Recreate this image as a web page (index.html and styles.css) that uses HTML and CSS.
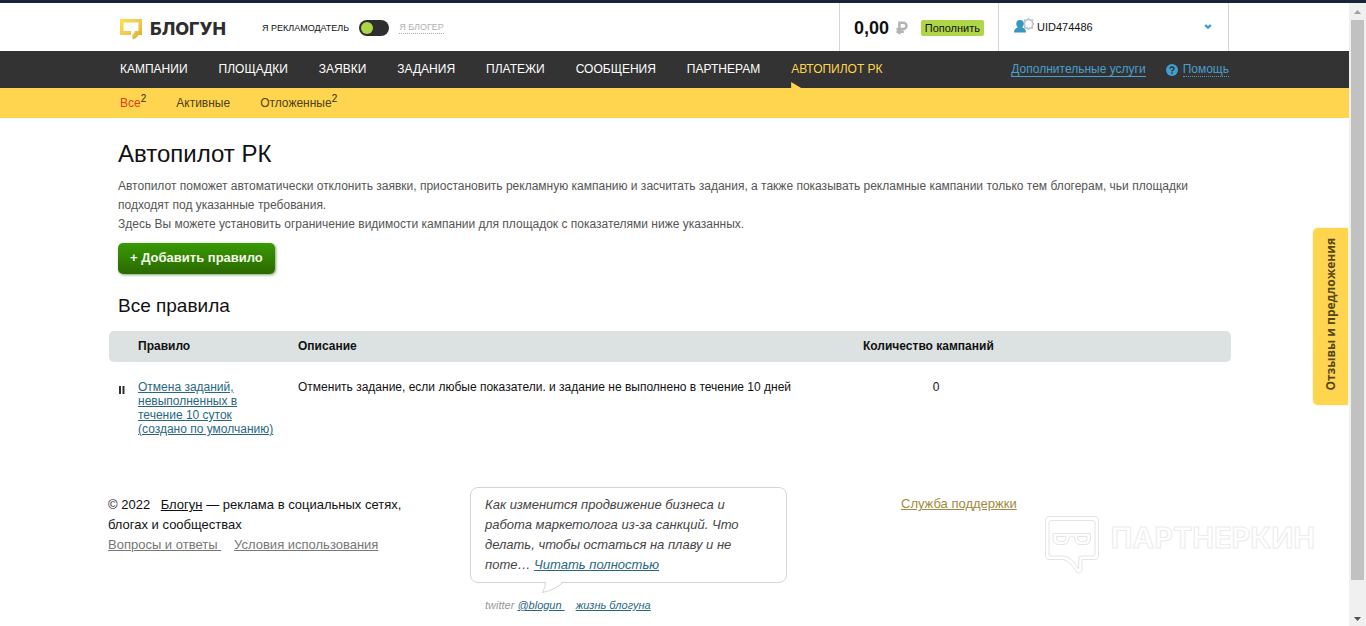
FILE: index.html
```html
<!DOCTYPE html>
<html lang="ru">
<head>
<meta charset="utf-8">
<title>Автопилот РК — Блогун</title>
<link rel="stylesheet" href="styles.css">
</head>
<body>
<div class="window">
  <div class="page">
    <header class="header">
      <div class="container header-row">
        <a class="logo" href="#">
          <svg class="logo-mark" width="23" height="22" viewBox="0 0 23 22" aria-hidden="true">
            <defs>
              <linearGradient id="gold" x1="0" y1="0" x2="1" y2="1">
                <stop offset="0" stop-color="#ffe04a"/>
                <stop offset="0.5" stop-color="#f0cb50"/>
                <stop offset="1" stop-color="#d9a92e"/>
              </linearGradient>
            </defs>
            <path d="M0 1H22V17H18.500Q17 20 12.500 21.500V17Q14.500 15.500 15 13H18.500V4.500H3.500V13H11V17H0Z" fill="url(#gold)"/>
          </svg>
          <span class="logo-text">БЛОГУН</span>
        </a>
        <div class="role">
          <label for="role-switch">Я РЕКЛАМОДАТЕЛЬ</label>
          <input class="switch" type="checkbox" role="switch" id="role-switch">
          <a class="role-other" href="#">Я БЛОГЕР</a>
        </div>
        <div class="balance">
          <strong class="sum">0,00</strong>
          <svg class="ruble" width="12" height="14" viewBox="0 0 12 14" aria-label="руб." role="img">
            <path d="M3.500 13.500V1.500H7.500A3 3 0 0 1 7.500 8H0.500M0.500 10.800H8" fill="none" stroke="#b4b4b4" stroke-width="2.600"/>
          </svg>
          <button class="refill" type="button">Пополнить</button>
        </div>
        <button class="user" type="button">
          <svg class="user-icon" width="20" height="16" viewBox="0 0 20 16" aria-hidden="true">
            <path d="M14.500 .8L16 2.300L18.300 2.200L18.200 4.400L19.400 6L18.200 7.600L18.300 9.800L16 9.700L14.500 11.200L13 9.700L10.800 9.800L10.900 7.600L9.600 6L10.900 4.400L10.800 2.200L13 2.300Z" fill="#fff" stroke="#bfc3c6" stroke-width="1.600"/>
            <path d="M0 14.500Q0 10.500 4 9.600Q2 7.800 2.300 5Q2.800 2 6 2Q9.500 2 9.700 5.200Q9.800 7.800 8 9.600Q12 10.500 12 14.500Z" fill="#3498c6"/>
          </svg>
          <span>UID474486</span>
          <svg class="chevron" width="8" height="6" viewBox="0 0 8 6" aria-hidden="true">
            <path d="M1.200 1L4 3.800L6.800 1" fill="none" stroke="#3498c6" stroke-width="2.200"/>
          </svg>
        </button>
      </div>
    </header>

    <nav class="nav">
      <div class="container nav-row">
        <a href="#">КАМПАНИИ</a>
        <a href="#">ПЛОЩАДКИ</a>
        <a href="#">ЗАЯВКИ</a>
        <a href="#">ЗАДАНИЯ</a>
        <a href="#">ПЛАТЕЖИ</a>
        <a href="#">СООБЩЕНИЯ</a>
        <a href="#">ПАРТНЕРАМ</a>
        <a class="active" href="#">АВТОПИЛОТ РК</a>
        <div class="nav-extra">
          <a class="extra-link" href="#">Дополнительные услуги</a>
          <a class="help" href="#">
            <svg width="12" height="12" viewBox="0 0 12 12" aria-hidden="true">
              <circle cx="6" cy="6" r="6" fill="#3f9fd0"/>
              <path d="M4 4.700Q4.100 3 6 3Q8 3 8 4.600Q8 5.500 6.900 6Q6 6.500 6 7.400M6 8.300V9.700" fill="none" stroke="#333" stroke-width="1.400"/>
            </svg>
            <span>Помощь</span>
          </a>
        </div>
      </div>
    </nav>

    <nav class="subnav">
      <div class="container subnav-row">
        <a class="current" href="#">Все<sup>2</sup></a>
        <a href="#">Активные</a>
        <a href="#">Отложенные<sup>2</sup></a>
      </div>
    </nav>

    <div class="container">
      <main class="content">
        <div class="intro">
          <h1>Автопилот РК</h1>
          <p>Автопилот поможет автоматически отклонить заявки, приостановить рекламную кампанию и засчитать задания, а также показывать рекламные кампании только тем блогерам, чьи площадки подходят под указанные требования.<br>Здесь Вы можете установить ограничение видимости кампании для площадок с показателями ниже указанных.</p>
          <button class="add" type="button">+ Добавить правило</button>
          <h2>Все правила</h2>
        </div>
        <table class="rules">
          <thead>
            <tr>
              <th class="col-state"></th>
              <th class="col-rule">Правило</th>
              <th class="col-text">Описание</th>
              <th class="col-count">Количество кампаний</th>
              <th></th>
            </tr>
          </thead>
          <tbody>
            <tr>
              <td class="col-state">
                <svg class="pause" width="6" height="8" viewBox="0 0 6 8" role="img" aria-label="Приостановлено">
                  <path d="M1 0V8M4.500 0V8" stroke="#333" stroke-width="2"/>
                </svg>
              </td>
              <td class="col-rule"><a href="#">Отмена заданий, невыполненных в течение 10 суток (создано по умолчанию)</a></td>
              <td>Отменить задание, если любые показатели. и задание не выполнено в течение 10 дней</td>
              <td class="count">0</td>
              <td></td>
            </tr>
          </tbody>
        </table>
      </main>

      <footer class="footer">
        <div class="about">
          <p>© 2022 <a class="brand" href="#">Блогун</a> — реклама в социальных сетях, блогах и сообществах</p>
          <p class="about-links"><a href="#">Вопросы и ответы&nbsp;</a><a href="#">Условия использования</a></p>
        </div>
        <div class="news">
          <div class="bubble">
            Как изменится продвижение бизнеса и работа маркетолога из-за санкций. Что делать, чтобы остаться на плаву и не поте… <a href="#">Читать полностью</a>
            <svg class="tail" width="24" height="12" viewBox="0 0 24 12" aria-hidden="true">
              <path d="M3 -1Q3 7 0.500 10.500Q13 8 21 -1Z" fill="#fff"/>
              <path d="M3.500 0Q3.500 6 0.500 10.500Q13 8 21.500 0" fill="none" stroke="#d5d5d5"/>
            </svg>
          </div>
          <p class="sources">twitter <a href="#">@blogun&nbsp;</a><a class="life" href="#">жизнь блогуна</a></p>
        </div>
        <a class="support" href="#">Служба поддержки</a>
      </footer>
    </div>

    <button class="feedback" type="button"><span>Отзывы и предложения</span></button>

    <div class="watermark">
      <svg width="54" height="58" viewBox="0 0 54 58" fill="none" stroke="#e4e4e4" aria-hidden="true">
        <path d="M5 .5H49Q53.500 .5 53.500 5V39Q53.500 43.500 49 43.500H37V54Q36.500 58 32.500 57Q24 44 18 43.500H5Q.5 43.500 .5 39V5Q.5 .5 5 .5Z"/>
        <path d="M6 4.500H48Q50 4.500 50 6.500V38Q50 40 48 40H34.500Q33.500 42 33.500 53Q26 40 18 40H6Q4 40 4 38V6.500Q4 4.500 6 4.500Z"/>
        <path d="M8 17.500H45.500V22Q45.500 28.500 40 28.500H35Q30 28.500 29.500 21H24Q23.500 28.500 18 28.500H13.500Q8 28.500 8 22Z"/>
        <path d="M11.500 20.500H21V22Q21 25.500 18 25.500H14.500Q11.500 25.500 11.500 22ZM32.500 20.500H42V22Q42 25.500 39 25.500H35.500Q32.500 25.500 32.500 22Z"/>
      </svg>
      <span>ПАРТНЕРКИН</span>
    </div>
  </div>

  <div class="scrollbar" aria-hidden="true">
    <svg width="17" height="17" viewBox="0 0 17 17"><path d="M5 11L8.500 7L12 11Z" fill="#a0a0a0"/></svg>
    <div class="track"><div class="thumb"></div></div>
    <svg width="17" height="17" viewBox="0 0 17 17"><path d="M5 8L8.500 12L12 8Z" fill="#505050"/></svg>
  </div>
</div>
</body>
</html>
```
FILE: styles.css
```css
* {
  box-sizing: border-box;
}

body {
  margin: 0;
  background: #fff;
  color: #111;
  font: 12px/14px "Liberation Sans", Arial, sans-serif;
}

h1, h2, p {
  margin: 0;
}

button {
  border: 0;
  padding: 0;
  background: none;
  color: inherit;
  font: inherit;
  cursor: pointer;
}

a {
  color: #29677f;
}

.window {
  display: flex;
  min-height: 100vh;
  border-top: 3px solid #15263a;
}

.page {
  position: relative;
  flex: 1;
  min-width: 0;
}

.container {
  max-width: 1109px;
  margin: 0 auto;
}

/* Header */
.header-row {
  display: flex;
  align-items: stretch;
  height: 48px;
}

.logo {
  display: flex;
  align-items: center;
  gap: 7px;
  width: 142px;
  padding-top: 4px;
  color: #2d2d2d;
  text-decoration: none;
}

.logo-text {
  font: 800 18px/20px Inter, sans-serif;
}

.role {
  display: flex;
  flex: 1;
  align-items: center;
  gap: 10px;
  padding-top: 2px;
  font-size: 9px;
}

.switch {
  appearance: none;
  width: 30px;
  height: 16px;
  margin: 0;
  padding: 2px;
  border-radius: 8px;
  background: #2e2e2e;
}

.switch::before {
  content: "";
  display: block;
  width: 12px;
  height: 12px;
  border-radius: 50%;
  background: #abd647;
}

.role-other {
  border-bottom: 1px dotted #aaa;
  color: #b0b0b0;
  line-height: 11px;
  text-decoration: none;
}

.balance {
  display: flex;
  align-items: center;
  width: 160px;
  padding: 2px 14px 0;
  border: solid #d6d6d6;
  border-width: 0 1px;
}

.sum {
  font-size: 18px;
  line-height: 20px;
}

.ruble {
  margin: 0 13px 0 7px;
}

.refill {
  height: 16px;
  padding: 0 4px;
  border-radius: 2px;
  background: #aed648;
  font-size: 11px;
}

.user {
  display: flex;
  align-items: center;
  gap: 3px;
  width: 230px;
  padding: 0 16px 0 15px;
  border-right: 1px solid #d6d6d6;
  font-size: 11px;
}

.user-icon {
  margin-bottom: 3px;
}

.chevron {
  margin-left: auto;
}

/* Main navigation */
.nav {
  background: #333;
}

.nav-row {
  display: flex;
  gap: 31px;
  height: 37px;
}

.nav-row > a {
  color: #fff;
  line-height: 36px;
  text-decoration: none;
}

.nav-row > .active {
  position: relative;
  color: #ffd54f;
}

.active::after {
  content: "";
  position: absolute;
  bottom: 0;
  left: 0;
  width: 10px;
  height: 6px;
  background: #ffd54f;
  clip-path: polygon(0 0, 100% 100%, 0 100%);
}

.nav-extra {
  display: flex;
  align-items: center;
  gap: 20px;
  margin-left: auto;
}

.nav-extra a {
  color: #4a9fcb;
  text-decoration: none;
}

.extra-link {
  border-bottom: 1px solid #4a9fcb;
}

.help {
  display: flex;
  align-items: center;
  gap: 5px;
}

.help span {
  border-bottom: 1px dotted #4a9fcb;
}

/* Secondary navigation */
.subnav {
  background: #ffd54f;
}

.subnav-row {
  display: flex;
  gap: 30px;
  height: 30px;
}

.subnav a {
  color: #4d4218;
  line-height: 30px;
  text-decoration: none;
}

.subnav .current {
  color: #e0401c;
}

.subnav sup {
  color: #332b10;
  font-size: 10px;
  line-height: 0;
}

/* Content */
.content {
  margin: 0 -2px 0 -11px;
}

.intro {
  padding: 22px 9px 0;
}

h1 {
  font-size: 24px;
  font-weight: 400;
  line-height: 28px;
}

.intro p {
  padding: 9px 0;
  color: #555;
  line-height: 19px;
}

.add {
  display: block;
  height: 31px;
  padding: 0 12px 2px;
  border-radius: 5px;
  background: linear-gradient(#389a05, #2b6800);
  box-shadow: 1px 1px 3px #83a070;
  color: #f2f8e8;
  font-size: 13px;
  font-weight: 700;
}

h2 {
  padding: 20px 0 13px;
  font-size: 19px;
  font-weight: 400;
  line-height: 24px;
}

.rules {
  width: 100%;
  border-collapse: separate;
  border-spacing: 0;
  table-layout: fixed;
}

.rules th {
  height: 31px;
  padding: 0 0 2px;
  background: #dce2e2;
  text-align: left;
}

.rules th:first-child {
  border-radius: 5px 0 0 5px;
}

.rules th:last-child {
  border-radius: 0 5px 5px 0;
}

.rules td {
  padding: 18px 0 0;
  vertical-align: top;
}

.rules .col-state {
  width: 29px;
  padding-left: 10px;
}

.col-rule {
  width: 160px;
}

.rules td.col-rule {
  padding-right: 20px;
}

.col-text {
  width: 565px;
}

.col-count {
  width: 146px;
}

.count {
  text-align: center;
}

.pause {
  display: block;
  margin-top: 6px;
}

/* Footer */
.footer {
  display: flex;
  align-items: flex-start;
  margin-left: -12px;
  padding-top: 51px;
  font-size: 13px;
  line-height: 20px;
}

.about {
  width: 362px;
  padding: 8px 50px 0 0;
}

.brand {
  margin-left: 7px;
  color: #111;
}

.about-links {
  display: flex;
  gap: 13px;
}

.about-links a {
  color: #777;
}

.news {
  width: 317px;
  font-style: italic;
}

.bubble {
  position: relative;
  padding: 7px 40px 7px 14px;
  border: 1px solid #d5d5d5;
  border-radius: 8px;
  color: #444;
}

.tail {
  position: absolute;
  top: 100%;
  left: 71px;
  overflow: visible;
}

.sources {
  padding: 12px 0 0 15px;
  color: #999;
  font-size: 11px;
}

.life {
  margin-left: 11px;
}

.support {
  margin: 7px 0 0 114px;
  color: #a08a40;
}

/* Overlays */
.feedback {
  position: absolute;
  top: 225px;
  right: 1px;
  width: 35px;
  height: 177px;
  border-radius: 5px 0 0 5px;
  background: #ffd54f;
  box-shadow: 0 0 2px #ffe58c;
  color: #54471a;
  font: 700 12px/18px "Open Sans", sans-serif;
}

.feedback span {
  writing-mode: vertical-rl;
  transform: rotate(180deg);
}

.watermark {
  position: absolute;
  right: 34px;
  bottom: 52px;
  display: flex;
  gap: 12px;
  color: #fff;
  font: 700 29px/44px Inter, sans-serif;
  -webkit-text-stroke: 1px #ebebeb;
}

/* Window scrollbar */
.scrollbar {
  display: flex;
  flex-direction: column;
  width: 17px;
  background: #f0f0f0;
}

.track {
  flex: 1;
  padding: 0 2px;
}

.thumb {
  height: 95%;
  background: #c1c1c1;
}
```
